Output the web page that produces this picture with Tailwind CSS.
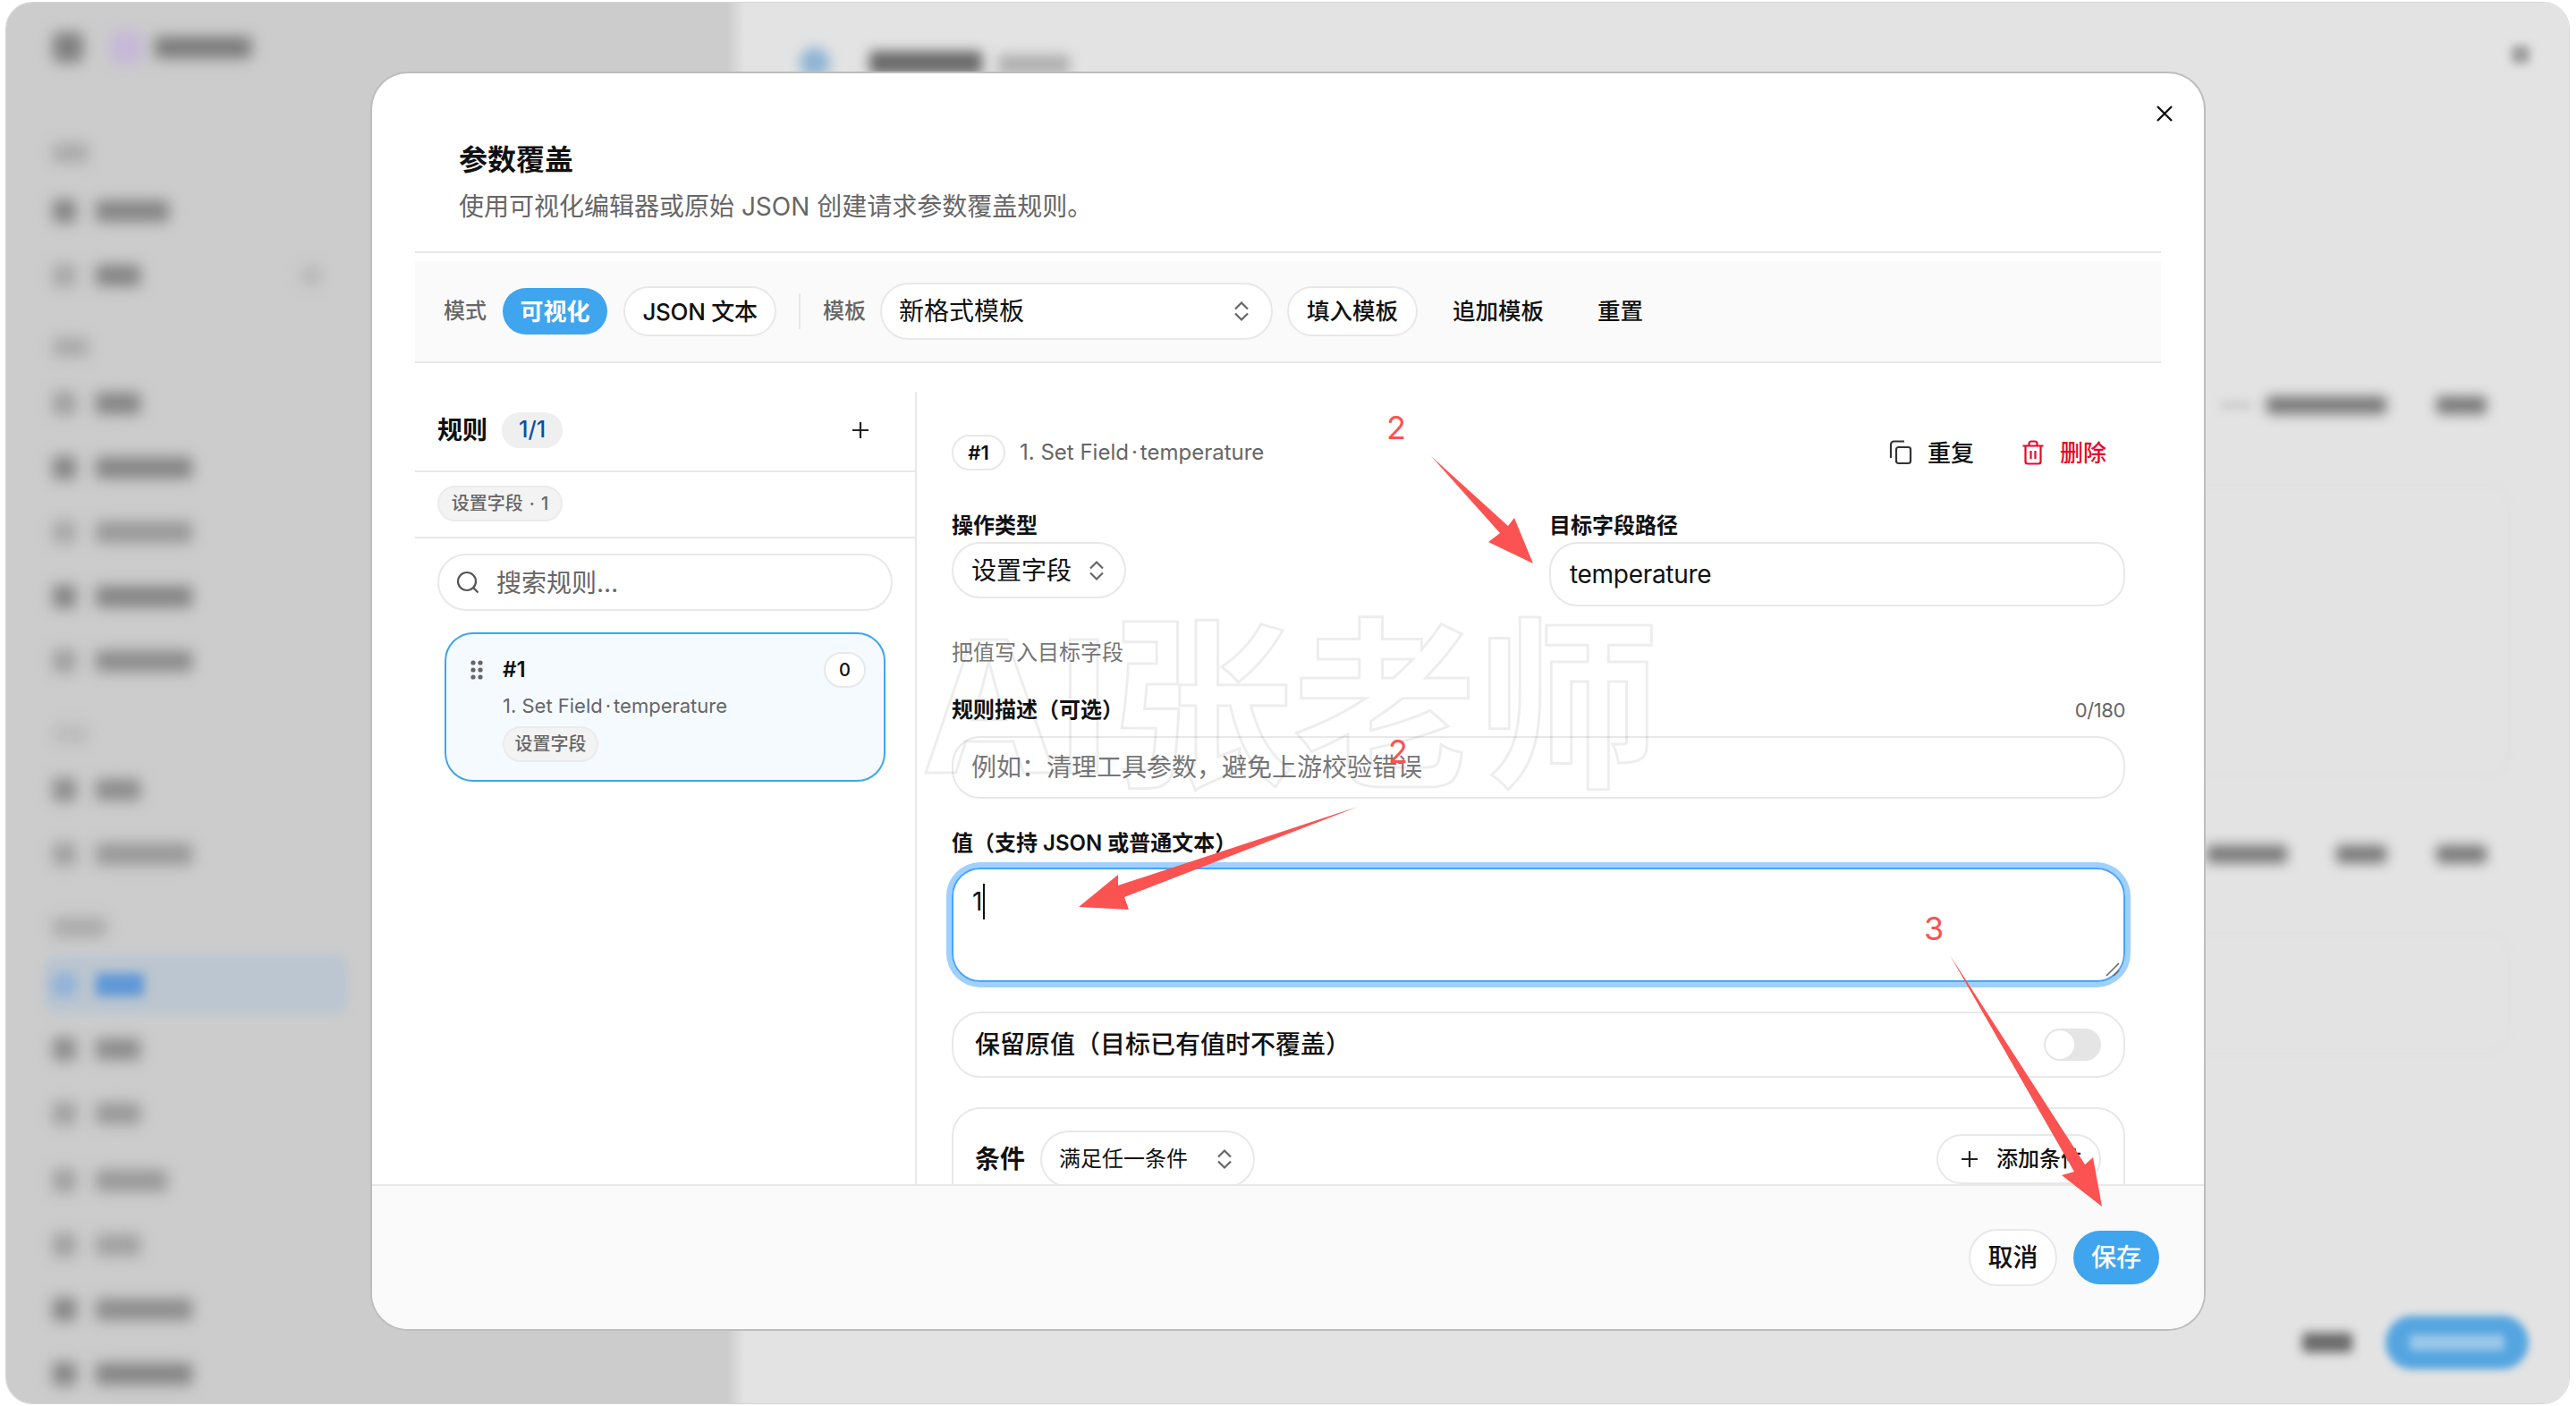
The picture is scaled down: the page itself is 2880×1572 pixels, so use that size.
<!DOCTYPE html>
<html lang="zh-CN">
<head>
    <meta charset="UTF-8">
    <meta name="viewport" content="width=device-width, initial-scale=1.0">
    <title>参数覆盖</title>
    <script src="https://cdn.jsdelivr.net/npm/@tailwindcss/browser@4"></script>
</head>
<body class="relative w-[2880px] h-[1572px] overflow-hidden bg-white font-['Inter','Noto_Sans_CJK_SC',sans-serif] text-[#111]">

<!-- blurred app behind the dialog -->
<div class="absolute left-[6px] top-[2px] w-[2867px] h-[1568px] rounded-[30px] overflow-hidden flex border border-[#d4d4d4]">
    <aside class="w-[806px] h-full bg-[#cccccc] pl-[52px] shrink-0">
        <div class="h-[100px] flex items-center">
            <span class="w-[34px] h-[34px] rounded-lg bg-[#808080] blur-[8px]"></span>
            <span class="ml-[30px] w-[36px] h-[36px] rounded-lg bg-[#c4b8d8] blur-[8px]"></span>
            <span class="ml-[14px] w-[108px] h-[24px] rounded bg-[#7a7a7a] blur-[8px]"></span>
        </div>
        <div class="mt-[57px] mb-[18px] w-[40px] h-[22px] rounded bg-[#aaaaaa] blur-[8px]"></div>
        <div class="flex items-center h-[72px]"><span class="w-[26px] h-[26px] rounded bg-[#848484] blur-[8px]"></span><span class="ml-[22px] w-[82px] h-[24px] rounded bg-[#848484] blur-[8px]"></span></div>
        <div class="flex items-center h-[72px]"><span class="w-[26px] h-[26px] rounded bg-[#a8a8a8] blur-[8px]"></span><span class="ml-[22px] w-[50px] h-[24px] rounded bg-[#848484] blur-[8px]"></span><span class="ml-[180px] w-[22px] h-[22px] rounded bg-[#b8b8b8] blur-[8px]"></span></div>
        <div class="mt-[33px] mb-[16px] w-[40px] h-[22px] rounded bg-[#aaaaaa] blur-[8px]"></div>
        <div class="flex items-center h-[72px]"><span class="w-[26px] h-[26px] rounded bg-[#a0a0a0] blur-[8px]"></span><span class="ml-[22px] w-[50px] h-[24px] rounded bg-[#848484] blur-[8px]"></span></div>
        <div class="flex items-center h-[72px]"><span class="w-[26px] h-[26px] rounded bg-[#848484] blur-[8px]"></span><span class="ml-[22px] w-[108px] h-[24px] rounded bg-[#848484] blur-[8px]"></span></div>
        <div class="flex items-center h-[72px]"><span class="w-[26px] h-[26px] rounded bg-[#a8a8a8] blur-[8px]"></span><span class="ml-[22px] w-[108px] h-[24px] rounded bg-[#989898] blur-[8px]"></span></div>
        <div class="flex items-center h-[72px]"><span class="w-[26px] h-[26px] rounded bg-[#848484] blur-[8px]"></span><span class="ml-[22px] w-[108px] h-[24px] rounded bg-[#848484] blur-[8px]"></span></div>
        <div class="flex items-center h-[72px]"><span class="w-[26px] h-[26px] rounded bg-[#a0a0a0] blur-[8px]"></span><span class="ml-[22px] w-[108px] h-[24px] rounded bg-[#8c8c8c] blur-[8px]"></span></div>
        <div class="mt-[35px] mb-[15px] w-[40px] h-[22px] rounded bg-[#bcbcbc] blur-[8px]"></div>
        <div class="flex items-center h-[72px]"><span class="w-[26px] h-[26px] rounded bg-[#8c8c8c] blur-[8px]"></span><span class="ml-[22px] w-[50px] h-[24px] rounded bg-[#8c8c8c] blur-[8px]"></span></div>
        <div class="flex items-center h-[72px]"><span class="w-[26px] h-[26px] rounded bg-[#a0a0a0] blur-[8px]"></span><span class="ml-[22px] w-[108px] h-[24px] rounded bg-[#989898] blur-[8px]"></span></div>
        <div class="mt-[35px] mb-[17px] w-[60px] h-[22px] rounded bg-[#aaaaaa] blur-[8px]"></div>
        <div class="relative flex items-center h-[72px]">
            <span class="absolute -left-[10px] top-[2px] w-[341px] h-[67px] rounded-[16px] bg-[#bcc6d0] blur-[5px]"></span>
            <span class="relative w-[26px] h-[26px] rounded bg-[#8fb2d8] blur-[7px]"></span><span class="relative ml-[22px] w-[54px] h-[26px] rounded bg-[#6098d6] blur-[6px]"></span>
        </div>
        <div class="flex items-center h-[72px]"><span class="w-[26px] h-[26px] rounded bg-[#8c8c8c] blur-[8px]"></span><span class="ml-[22px] w-[50px] h-[24px] rounded bg-[#8c8c8c] blur-[8px]"></span></div>
        <div class="flex items-center h-[72px]"><span class="w-[26px] h-[26px] rounded bg-[#a0a0a0] blur-[8px]"></span><span class="ml-[22px] w-[50px] h-[24px] rounded bg-[#989898] blur-[8px]"></span></div>
        <div class="flex items-center h-[72px] mt-[3px]"><span class="w-[26px] h-[26px] rounded bg-[#a0a0a0] blur-[8px]"></span><span class="ml-[22px] w-[80px] h-[24px] rounded bg-[#989898] blur-[8px]"></span></div>
        <div class="flex items-center h-[72px]"><span class="w-[26px] h-[26px] rounded bg-[#a0a0a0] blur-[8px]"></span><span class="ml-[22px] w-[50px] h-[24px] rounded bg-[#a0a0a0] blur-[8px]"></span></div>
        <div class="flex items-center h-[72px]"><span class="w-[26px] h-[26px] rounded bg-[#848484] blur-[8px]"></span><span class="ml-[22px] w-[108px] h-[24px] rounded bg-[#8c8c8c] blur-[8px]"></span></div>
        <div class="flex items-center h-[72px]"><span class="w-[26px] h-[26px] rounded bg-[#848484] blur-[8px]"></span><span class="ml-[22px] w-[108px] h-[24px] rounded bg-[#848484] blur-[8px]"></span></div>
    </aside>
    <div class="w-[20px] h-full shrink-0 bg-gradient-to-r from-[#cccccc] to-[#e3e3e3]"></div>
    <main class="flex-1 h-full bg-[#e3e3e3] flex flex-col">
        <div class="h-[102px] flex items-end pl-[61px]">
            <span class="mb-[18px] w-[34px] h-[34px] rounded-full bg-[#8fb5d4] blur-[7px]"></span>
            <span class="mb-[22px] ml-[44px] w-[126px] h-[26px] rounded bg-[#6a6a6a] blur-[7px]"></span>
            <span class="mb-[22px] ml-[18px] w-[80px] h-[22px] rounded bg-[#b0b0b0] blur-[7px]"></span>
            <span class="ml-auto mr-[44px] mb-[34px] w-[20px] h-[20px] rounded bg-[#a0a0a0] blur-[5px]"></span>
        </div>
        <div class="mt-[328px] h-[40px] flex items-center justify-end pr-[92px]">
            <span class="w-[36px] h-[10px] rounded bg-[#cfcfcf] blur-[5px]"></span>
            <span class="ml-[16px] w-[134px] h-[20px] rounded bg-[#7a7a7a] blur-[7px]"></span>
            <span class="ml-[56px] w-[56px] h-[20px] rounded bg-[#7a7a7a] blur-[7px]"></span>
        </div>
        <div class="mt-[68px] mr-[66px] h-[327px] rounded-[24px] border-2 border-[#dfdfdf] blur-[3px]"></div>
        <div class="mt-[67px] h-[40px] flex items-center justify-end pr-[92px]">
            <span class="w-[90px] h-[20px] rounded bg-[#7a7a7a] blur-[7px]"></span>
            <span class="ml-[55px] w-[56px] h-[20px] rounded bg-[#7a7a7a] blur-[7px]"></span>
            <span class="ml-[56px] w-[56px] h-[20px] rounded bg-[#7a7a7a] blur-[7px]"></span>
        </div>
        <div class="mt-[67px] mr-[66px] h-[137px] rounded-[24px] border-2 border-[#dfdfdf] blur-[3px]"></div>
        <div class="mt-[289px] h-[65px] flex items-center justify-end pr-[45px]">
            <span class="w-[56px] h-[22px] rounded bg-[#6a6a6a] blur-[6px]"></span>
            <span class="ml-[37px] w-[160px] h-[60px] rounded-full bg-[#55a5e0] blur-[4px] flex items-center justify-center"><span class="w-[106px] h-[18px] rounded bg-[#9ac8ea]"></span></span>
        </div>
    </main>
</div>

<!-- dialog -->
<div class="absolute left-[416px] top-[82px] w-[2048px] h-[1404px] rounded-[40px] overflow-hidden bg-white flex flex-col shadow-[0_0_0_2px_#bdbdbd]">
    <div class="h-[201px] shrink-0 mx-[48px] border-b-2 border-[#e8e8e8] pl-[49px] pt-[77px]">
        <h2 class="text-[32px] leading-[40px] font-semibold">参数覆盖</h2>
        <p class="mt-[14px] text-[28px] leading-[36px] text-[#666]">使用可视化编辑器或原始 JSON 创建请求参数覆盖规则。</p>
    </div>
    <svg class="absolute right-[34px] top-[35px]" width="20" height="20" viewBox="0 0 20 20" fill="none" stroke="#111" stroke-width="2.4"><path d="M2 2 L18 18 M18 2 L2 18"/></svg>

    <div class="mt-[9px] h-[114px] shrink-0 mx-[48px] bg-[#fafafa] border-b-2 border-[#e8e8e8] pl-[32px] flex items-center">
        <span class="text-[24px] font-medium text-[#666] w-[66px]">模式</span>
        <span class="w-[117px] h-[52px] rounded-full bg-[#3fa5ee] text-white text-[26px] font-semibold flex items-center justify-center">可视化</span>
        <span class="ml-[18px] w-[171px] h-[56px] rounded-full bg-white border-2 border-[#e8e8e8] text-[26px] tracking-[-0.3px] font-medium flex items-center justify-center">JSON 文本</span>
        <span class="ml-[25px] w-[2px] h-[40px] bg-[#e8e8e8]"></span>
        <span class="ml-[25px] text-[24px] font-medium text-[#666] w-[64px]">模板</span>
        <span class="w-[439px] h-[64px] rounded-full bg-white border-2 border-[#e8e8e8] pl-[19px] pr-[23px] text-[28px] flex items-center justify-between">新格式模板
            <svg width="20" height="24" viewBox="0 0 20 24" fill="none" stroke="#666" stroke-width="2.2"><path d="M3 9.5 L10 2.5 L17 9.5 M3 14.5 L10 21.5 L17 14.5"/></svg>
        </span>
        <span class="ml-[16px] w-[146px] h-[56px] rounded-full bg-white border-2 border-[#e8e8e8] text-[25.5px] font-medium flex items-center justify-center">填入模板</span>
        <span class="ml-[39px] text-[25.5px] font-medium">追加模板</span>
        <span class="ml-[60px] text-[25.5px] font-medium">重置</span>
    </div>

    <div class="flex-1 min-h-0 flex mx-[48px] pt-[32px]">
        <div class="w-[561px] shrink-0 border-r-2 border-[#e8e8e8]">
            <div class="h-[90px] border-b-2 border-[#e8e8e8] pl-[25px] pr-[49px] pb-[2px] flex items-center">
                <span class="text-[28px] font-semibold">规则</span>
                <span class="ml-[16px] w-[68px] h-[40px] rounded-full bg-[#efefef] text-[25px] text-[#0a4fa5] font-medium flex items-center justify-center">1/1</span>
                <svg class="ml-auto" width="24" height="24" viewBox="0 0 24 24" fill="none" stroke="#222" stroke-width="2.2"><path d="M12 3 V21 M3 12 H21"/></svg>
            </div>
            <div class="h-[74px] border-b-2 border-[#e8e8e8] pl-[25px] pb-[2px] flex items-center">
                <span class="w-[140px] h-[40px] rounded-full bg-[#f3f3f3] border-2 border-[#ebebeb] text-[20px] font-medium text-[#666] flex items-center justify-center">设置字段<span class="mx-[7px]">·</span>1</span>
            </div>
            <div class="mt-[17px] ml-[25px] w-[509px] h-[64px] rounded-full border-2 border-[#e8e8e8] pl-[19px] flex items-center text-[28px] text-[#666]">
                <svg width="26" height="26" viewBox="0 0 26 26" fill="none" stroke="#555" stroke-width="2.2"><circle cx="12" cy="12" r="10"/><path d="M19.5 19.5 L24.5 24.5"/></svg>
                <span class="ml-[19px] pt-[2px]">搜索规则…</span>
            </div>
            <div class="mt-[24px] ml-[33px] w-[493px] h-[167px] rounded-[32px] border-2 border-[#3fa5ee] bg-[#f5fafe] pl-[27px] pt-[20px] pr-[20px]">
                <div class="flex items-center h-[40px]">
                    <svg width="14" height="22" viewBox="0 0 14 22" fill="#666"><circle cx="3" cy="3" r="2.6"/><circle cx="11" cy="3" r="2.6"/><circle cx="3" cy="11" r="2.6"/><circle cx="11" cy="11" r="2.6"/><circle cx="3" cy="19" r="2.6"/><circle cx="11" cy="19" r="2.6"/></svg>
                    <span class="ml-[22px] text-[24px] font-semibold">#1</span>
                    <span class="ml-auto w-[47px] h-[40px] rounded-full bg-white border-2 border-[#e8e8e8] text-[20px] font-medium flex items-center justify-center">0</span>
                </div>
                <div class="mt-[4px] ml-[36px] text-[22px] leading-[32px] text-[#666]">1. Set Field<span class="mx-[3px]">·</span>temperature</div>
                <span class="mt-[7px] ml-[36px] w-[107px] h-[40px] rounded-full bg-[#f3f3f3] border-2 border-[#ebebeb] text-[20px] font-medium text-[#666] flex items-center justify-center">设置字段</span>
            </div>
        </div>

        <div class="relative flex-1 min-w-0 pl-[39px] pr-[40px] pt-[48px] overflow-hidden">
            <div class="flex items-center h-[40px]">
                <span class="w-[60px] h-[40px] rounded-full border-2 border-[#e8e8e8] text-[22px] font-semibold flex items-center justify-center">#1</span>
                <span class="ml-[16px] text-[24px] text-[#666]">1. Set Field<span class="mx-[3px]">·</span>temperature</span>
                <span class="ml-auto flex items-center text-[26px] font-medium">
                    <svg width="28" height="28" viewBox="0 0 28 28" fill="none" stroke="#333" stroke-width="2.2"><rect x="9" y="8" width="16" height="18" rx="2.5"/><path d="M3 20 V5 a3.5 3.5 0 0 1 3.5 -3.5 H18"/></svg>
                    <span class="ml-[16px]">重复</span>
                </span>
                <span class="ml-[53px] mr-[21px] flex items-center text-[26px] font-medium text-[#e6082a]">
                    <svg width="26" height="28" viewBox="0 0 26 28" fill="none" stroke="#e6082a" stroke-width="2.2"><path d="M1.5 6.5 H24.5 M4.5 6.5 V24 a2.5 2.5 0 0 0 2.5 2.5 H19 a2.5 2.5 0 0 0 2.5 -2.5 V6.5 M8.5 6.5 V4 a2.5 2.5 0 0 1 2.5 -2.5 H15 a2.5 2.5 0 0 1 2.5 2.5 V6.5 M10.5 12 V21 M15.5 12 V21"/></svg>
                    <span class="ml-[17px]">删除</span>
                </span>
            </div>

            <div class="mt-[46px] flex">
                <div class="w-[668px] shrink-0">
                    <div class="text-[24px] leading-[32px] font-semibold">操作类型</div>
                    <div class="mt-[2px] w-[195px] h-[63px] rounded-full border-2 border-[#e8e8e8] pl-[20px] pr-[21px] text-[28px] flex items-center justify-between">设置字段
                        <svg width="20" height="24" viewBox="0 0 20 24" fill="none" stroke="#666" stroke-width="2.2"><path d="M3 9.5 L10 2.5 L17 9.5 M3 14.5 L10 21.5 L17 14.5"/></svg>
                    </div>
                </div>
                <div class="flex-1 min-w-0">
                    <div class="text-[24px] leading-[32px] font-semibold">目标字段路径</div>
                    <div class="mt-[2px] h-[72px] rounded-[32px] border-2 border-[#e8e8e8] pl-[21px] text-[28px] tracking-[-0.3px] flex items-center">temperature</div>
                </div>
            </div>

            <div class="mt-[36px] text-[24px] leading-[32px] text-[#777]">把值写入目标字段</div>

            <div class="mt-[32px] flex items-center justify-between leading-[32px]">
                <span class="text-[24px] font-semibold">规则描述（可选）</span>
                <span class="text-[22px] tracking-[-0.4px] text-[#666]">0/180</span>
            </div>
            <div class="mt-[13px] h-[70px] rounded-[32px] border-2 border-[#e8e8e8] pl-[20px] text-[28px] text-[#777] flex items-center">例如：清理工具参数，避免上游校验错误</div>

            <div class="mt-[34px] text-[24px] leading-[32px] font-semibold">值（支持 JSON 或普通文本）</div>
            <div class="relative mt-[11px] h-[128px] rounded-[32px] border-2 border-[#46a4ff] shadow-[0_0_0_6px_#9fd0fe] pl-[21px] pt-[16px] text-[28px] leading-[40px]">
                <span class="inline-block border-r-2 border-[#111] pr-[1px]">1</span>
                <svg class="absolute right-[3px] bottom-[3px]" width="18" height="18" viewBox="0 0 18 18" fill="none" stroke="#666" stroke-width="1.5"><path d="M2 16 L16 2 M10 16 L16 10"/></svg>
            </div>

            <div class="mt-[33px] h-[74px] rounded-[32px] border-2 border-[#e8e8e8] pl-[24px] pr-[25px] flex items-center justify-between">
                <span class="text-[28px] font-medium">保留原值（目标已有值时不覆盖）</span>
                <span class="w-[64px] h-[36px] rounded-full bg-[#e5e5e5] p-[2px] flex"><span class="w-[32px] h-[32px] rounded-full bg-white"></span></span>
            </div>

            <div class="mt-[33px] h-[200px] rounded-[32px] border-2 border-[#e8e8e8] pl-[24px] pr-[25px] pt-[24px] flex items-start">
                <span class="mt-[14px] text-[28px] leading-[36px] font-semibold">条件</span>
                <span class="ml-[17px] w-[240px] h-[64px] rounded-full border-2 border-[#e8e8e8] pl-[19px] pr-[22px] text-[24px] flex items-center justify-between">满足任一条件
                    <svg width="20" height="24" viewBox="0 0 20 24" fill="none" stroke="#666" stroke-width="2.2"><path d="M3 9.5 L10 2.5 L17 9.5 M3 14.5 L10 21.5 L17 14.5"/></svg>
                </span>
                <span class="ml-auto mt-[4px] w-[184px] h-[56px] rounded-full border-2 border-[#e8e8e8] pl-[25px] text-[24px] font-medium flex items-center">
                    <svg width="20" height="20" viewBox="0 0 20 20" fill="none" stroke="#222" stroke-width="2.2"><path d="M10 1 V19 M1 10 H19"/></svg>
                    <span class="ml-[20px]">添加条件</span>
                </span>
            </div>
        </div>
    </div>

    <div class="h-[162px] shrink-0 relative bg-[#fafafa] border-t-2 border-[#e8e8e8] pr-[50px] pt-[48px] flex justify-end items-start">
        <span class="w-[99px] h-[64px] rounded-full bg-white border-2 border-[#e8e8e8] text-[28px] font-medium flex items-center justify-center">取消</span>
        <span class="ml-[18px] mt-[2px] w-[96px] h-[60px] rounded-full bg-[#3fa5ee] text-white text-[28px] font-medium flex items-center justify-center">保存</span>
    </div>
</div>

<!-- watermark and annotations on top of the screenshot -->
<div class="absolute left-[1030px] top-[644px] whitespace-nowrap text-[205px] leading-[290px] font-bold text-transparent [-webkit-text-stroke:3px_rgba(0,0,0,0.07)] pointer-events-none">AI张老师</div>

<svg class="absolute inset-0 pointer-events-none" width="2880" height="1572" viewBox="0 0 2880 1572" fill="#fb5252">
    <polygon points="1600,510 1686,588 1693,579 1714,630 1664,606 1677,596"/>
    <polygon points="1518,902 1257,1003 1262,1017 1206,1014 1250,978 1250,990"/>
    <polygon points="2180,1068 2331,1302 2340,1294 2350,1349 2305,1314 2319,1310"/>
</svg>
<span class="absolute left-[1550px] top-[456px] text-[36px] leading-[44px] text-[#fb5252]">2</span>
<span class="absolute left-[1552px] top-[818px] text-[36px] leading-[44px] text-[#fb5252]">2</span>
<span class="absolute left-[2151px] top-[1016px] text-[36px] leading-[44px] text-[#fb5252]">3</span>

</body>
</html>
